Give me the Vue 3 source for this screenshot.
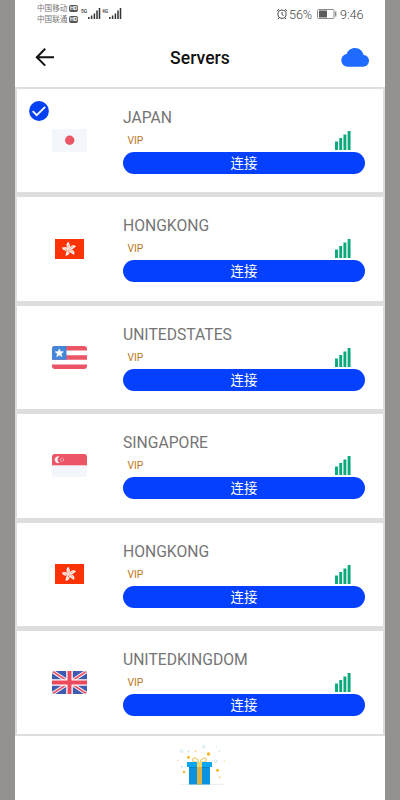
<template>
  <div class="screen">
    <div class="statusbar">
      <div class="carriers">
        <div v-for="c in carriers" :key="c" class="carrier">
          <span>{{ c }}</span><b>HD</b>
        </div>
      </div>
      <div v-for="n in networks" :key="n" class="network">
        <span>{{ n }}</span>
        <svg width="13" height="12" viewBox="0 0 13 12">
          <path d="M.8 12v-2M3.600 12V8.500M6.400 12V6.500M9 12V3.500M11.500 12V1" stroke="#333" stroke-width="1.500" />
        </svg>
      </div>
      <div class="status-right">
        <svg width="12" height="12" viewBox="0 0 12 12" fill="none" stroke="#444" stroke-width="1">
          <circle cx="6" cy="6.200" r="4.100" />
          <path d="M6 4v2.600l1.600 1M.8 3.200 3 1.200M11.200 3.200 9 1.200M3 9.800l-1 1.300M9 9.800l1 1.300" />
        </svg>
        <span class="percent">56%</span>
        <svg class="battery" width="20" height="10" viewBox="0 0 20 10">
          <rect x=".5" y=".5" width="16.500" height="9" rx="1" fill="#fff" stroke="#8a8a8a" />
          <rect x="2" y="1.500" width="8" height="7" fill="#5c5c5c" />
          <path d="M18.700 2.500v5" stroke="#8a8a8a" stroke-width="1.400" />
        </svg>
        <span class="clock">9:46</span>
      </div>
    </div>

    <header class="navbar">
      <svg class="back" width="20" height="20" viewBox="0 0 20 20" fill="none" stroke="#111" stroke-width="2">
        <path d="M10.200 .8 1.800 9.200l8.400 8.400M2 9.200h17" />
      </svg>
      <h1>Servers</h1>
      <svg class="cloud" width="28" height="19" viewBox="0 0 28 19">
        <path d="M6.500 18.700A6.400 6.400 0 0 1 5.600 6C7 2.400 10 .1 14 .1c4.300 0 7.700 2.800 8.600 7C25.600 7.200 28 9.800 28 12.800c0 3.300-2.600 5.900-5.900 5.900z" fill="#1f6bff" />
      </svg>
    </header>

    <div class="list">
      <div v-for="(server, i) in servers" :key="i" class="card">
        <svg v-if="i === selected" class="check" width="20" height="20" viewBox="0 0 20 20">
          <circle cx="10" cy="10" r="9.900" fill="#0540f2" />
          <path d="m3.700 10.200 4 4 8.500-8.400" fill="none" stroke="#fff" stroke-width="1.800" />
        </svg>

        <div class="flag">
          <svg v-if="server.flag === 'jp'" width="35" height="23" viewBox="0 0 35 23">
            <rect width="35" height="23" rx="2" fill="#f3f6fa" />
            <circle cx="17.700" cy="11.300" r="4.700" fill="#ec5565" />
          </svg>
          <svg v-else-if="server.flag === 'hk'" width="35" height="23" viewBox="0 0 35 23">
            <rect x="3" y="1" width="29" height="20" fill="#fb3306" />
            <g v-for="n in 5" :key="n" :transform="`translate(17.200 11.200) rotate(${n * 72 - 8})`">
              <path d="M0 0C-2.600-2-3.200-6.200.6-7.400 0-5.600 2.800-4 0 0z" fill="#fff" />
              <path d="M0-1.500Q-1.200-3-.3-4.800" fill="none" stroke="#fb6f50" stroke-width=".7" />
            </g>
          </svg>
          <svg v-else-if="server.flag === 'us'" width="35" height="23" viewBox="0 0 35 23">
            <g clip-path="url(#flag-clip)">
              <rect width="35" height="23" fill="#fff" />
              <path d="M0 2.300h35M0 11.500h35M0 20.700h35" stroke="#ec5565" stroke-width="4.600" />
              <rect width="14.500" height="13.800" fill="#4487d8" />
              <path d="m7.300 2.800 1.200 2.800 3 .2-2.300 2 .8 3-2.700-1.700-2.600 1.700.7-3-2.300-2 3.100-.2z" fill="#fff" stroke="#fff" stroke-width=".5" />
            </g>
          </svg>
          <svg v-else-if="server.flag === 'sg'" width="35" height="23" viewBox="0 0 35 23">
            <g clip-path="url(#flag-clip)">
              <rect width="35" height="23" fill="#f3f6fa" />
              <rect width="35" height="11.300" fill="#ec5565" />
              <path d="M7 2.600a3.200 3.200 0 1 0 0 6.200 3.700 3.700 0 0 1 0-6.200z" fill="#fff" stroke="#fff" stroke-width=".5" />
              <circle cx="10" cy="5.800" r="1.700" fill="none" stroke="#f9c9cf" stroke-width="1" stroke-dasharray="1.400 .7" />
            </g>
          </svg>
          <svg v-else width="35" height="23" viewBox="0 0 35 23">
            <g clip-path="url(#flag-clip)">
              <rect width="35" height="23" fill="#3e5bb0" />
              <path d="m0 0 35 23M35 0 0 23" stroke="#f3f6fa" stroke-width="3.600" />
              <path d="m0 0 35 23M35 0 0 23" stroke="#ec5565" stroke-width="1.800" />
              <path d="M17.500 0v23M0 11.500h35" stroke="#fff" stroke-width="6.600" />
              <path d="M17.500 0v23M0 11.500h35" stroke="#ec4a5c" stroke-width="4" />
            </g>
          </svg>
        </div>

        <div class="info">
          <div class="name">{{ server.name }}</div>
          <div class="meta">
            <span class="vip">VIP</span>
            <svg width="16" height="20" viewBox="0 0 16 20">
              <path d="M1.500 20v-8.500M5.700 20V8M9.900 20V4.500M14.100 20V1" stroke="#0ba97c" stroke-width="2.900" />
            </svg>
          </div>
          <button class="connect">连接</button>
        </div>
      </div>
    </div>

    <footer class="footer">
      <svg width="56" height="46" viewBox="0 0 56 46">
        <path d="M6 39.300h44" stroke="#e9edf0" stroke-width="1" />
        <path d="M24 17.500c-3-.2-7-.7-6.300-3.200.8-2.700 5.300-1.200 6.300 3.200zm1 0c1-4.400 5.500-5.900 6.300-3.200.7 2.500-3.300 3-6.300 3.200z" fill="#fff" stroke="#f0c75e" stroke-width="1.100" />
        <rect x="14" y="20" width="21" height="19.500" fill="#0b93df" />
        <rect x="12" y="17" width="25" height="5" fill="#08a6f3" />
        <path d="M14 22h21v1H14z" fill="#0783cb" />
        <rect x="22" y="17" width="5" height="22.500" fill="#dfb443" />
        <rect x="22" y="17" width="5" height="5" fill="#ffd568" />
        <g fill="#f5b720">
          <circle cx="13.500" cy="12.200" r="1.500" />
          <circle cx="33.500" cy="9" r="1.700" />
          <circle cx="42.500" cy="25.300" r="1.500" />
          <circle cx="9" cy="27" r="1.200" />
          <circle cx="20.500" cy="6.300" r=".7" />
          <circle cx="44.500" cy="32.300" r=".8" />
          <circle cx="49.500" cy="16.300" r=".5" />
          <circle cx="3" cy="15.300" r=".5" />
        </g>
        <g fill="none" stroke="#c5e2eb" stroke-width=".9">
          <circle cx="28.700" cy="1.700" r="1.200" />
          <circle cx="6.700" cy="6.200" r="1.200" />
          <circle cx="13.500" cy="6.300" r=".7" />
          <circle cx="40.700" cy="16.300" r="1.400" />
          <circle cx="7" cy="21.800" r=".8" />
          <circle cx="44.500" cy="6.300" r=".5" />
          <circle cx="41.500" cy="1.800" r=".3" />
        </g>
      </svg>
    </footer>

    <svg class="defs" width="0" height="0">
      <clipPath id="flag-clip"><rect width="35" height="23" rx="3" /></clipPath>
    </svg>
  </div>
</template>

<script setup>
import { ref } from "vue";

const carriers = ["中国移动", "中国联通"];
const networks = ["5G", "4G"];
const selected = ref(0);

const servers = ref([
  { name: "JAPAN", flag: "jp" },
  { name: "HONGKONG", flag: "hk" },
  { name: "UNITEDSTATES", flag: "us" },
  { name: "SINGAPORE", flag: "sg" },
  { name: "HONGKONG", flag: "hk" },
  { name: "UNITEDKINGDOM", flag: "uk" },
]);
</script>

<style>
body {
  background: #94928f;
}
</style>

<style scoped>
.screen {
  box-sizing: border-box;
  width: 369.5px;
  height: 800px;
  margin-left: 15px;
  background: #fff;
  overflow: hidden;
  position: relative;
  font-family: Roboto, "Noto Sans CJK SC", sans-serif;
}

.statusbar {
  display: flex;
  height: 30px;
  box-sizing: border-box;
  padding: 3px 21px 0 22px;
}

.carriers {
  width: 44px;
}

.carrier {
  display: flex;
  align-items: center;
  height: 11px;
  font-size: 7.6px;
  line-height: 11px;
  color: #777;
  white-space: nowrap;
}

.carrier b {
  margin-left: 1.5px;
  padding: 0 1px;
  border-radius: 2px;
  background: #555;
  color: #fff;
  font-size: 5.5px;
  line-height: 6.5px;
}

.network {
  display: flex;
  width: 21px;
  padding-top: 5px;
  font-size: 5px;
  line-height: 6px;
  font-weight: bold;
  color: #555;
}

.network svg {
  flex: none;
  margin-top: -1px;
}

.network span {
  width: 6.5px;
}

.status-right {
  display: flex;
  align-items: center;
  height: 22px;
  margin-left: auto;
  font-size: 12.6px;
  font-weight: 300;
  color: #444;
}

.percent {
  width: 25px;
  margin: 0 3px 0 1px;
}

.clock {
  margin-left: 3px;
}

.navbar {
  display: flex;
  align-items: center;
  justify-content: space-between;
  height: 57px;
  box-sizing: border-box;
  padding: 0 15.5px 2px 20px;
}

.navbar h1 {
  margin: 0 0 0 4px;
  font-size: 17.6px;
  font-weight: 500;
  color: #111;
}

.list {
  display: flex;
  flex-direction: column;
  gap: 5px;
  padding: 2px;
  background: #dedede;
}

.card {
  position: relative;
  display: flex;
  height: 103.4px;
  background: #fff;
}

.check {
  position: absolute;
  top: 12px;
  left: 12px;
}

.flag {
  display: flex;
  align-items: center;
  width: 71.5px;
  padding-left: 34.5px;
}

.info {
  width: 242px;
  padding-top: 19px;
}

.name {
  height: 22px;
  font-size: 15.7px;
  line-height: 20.6px;
  color: #757575;
}

.meta {
  display: flex;
  justify-content: space-between;
  height: 22px;
  padding: 0 14px 0 4.5px;
}

.vip {
  font-size: 10.3px;
  line-height: 22px;
  color: #b9761b;
}

.connect {
  display: block;
  width: 100%;
  height: 22px;
  padding: 1px 0 0;
  border: 0;
  border-radius: 11px;
  background: #0540ff;
  color: #fff;
  font-family: inherit;
  font-size: 13.4px;
  line-height: 21px;
}

.footer {
  display: flex;
  justify-content: center;
  padding: 9px 0 0 7px;
}

.defs {
  position: absolute;
}
</style>
